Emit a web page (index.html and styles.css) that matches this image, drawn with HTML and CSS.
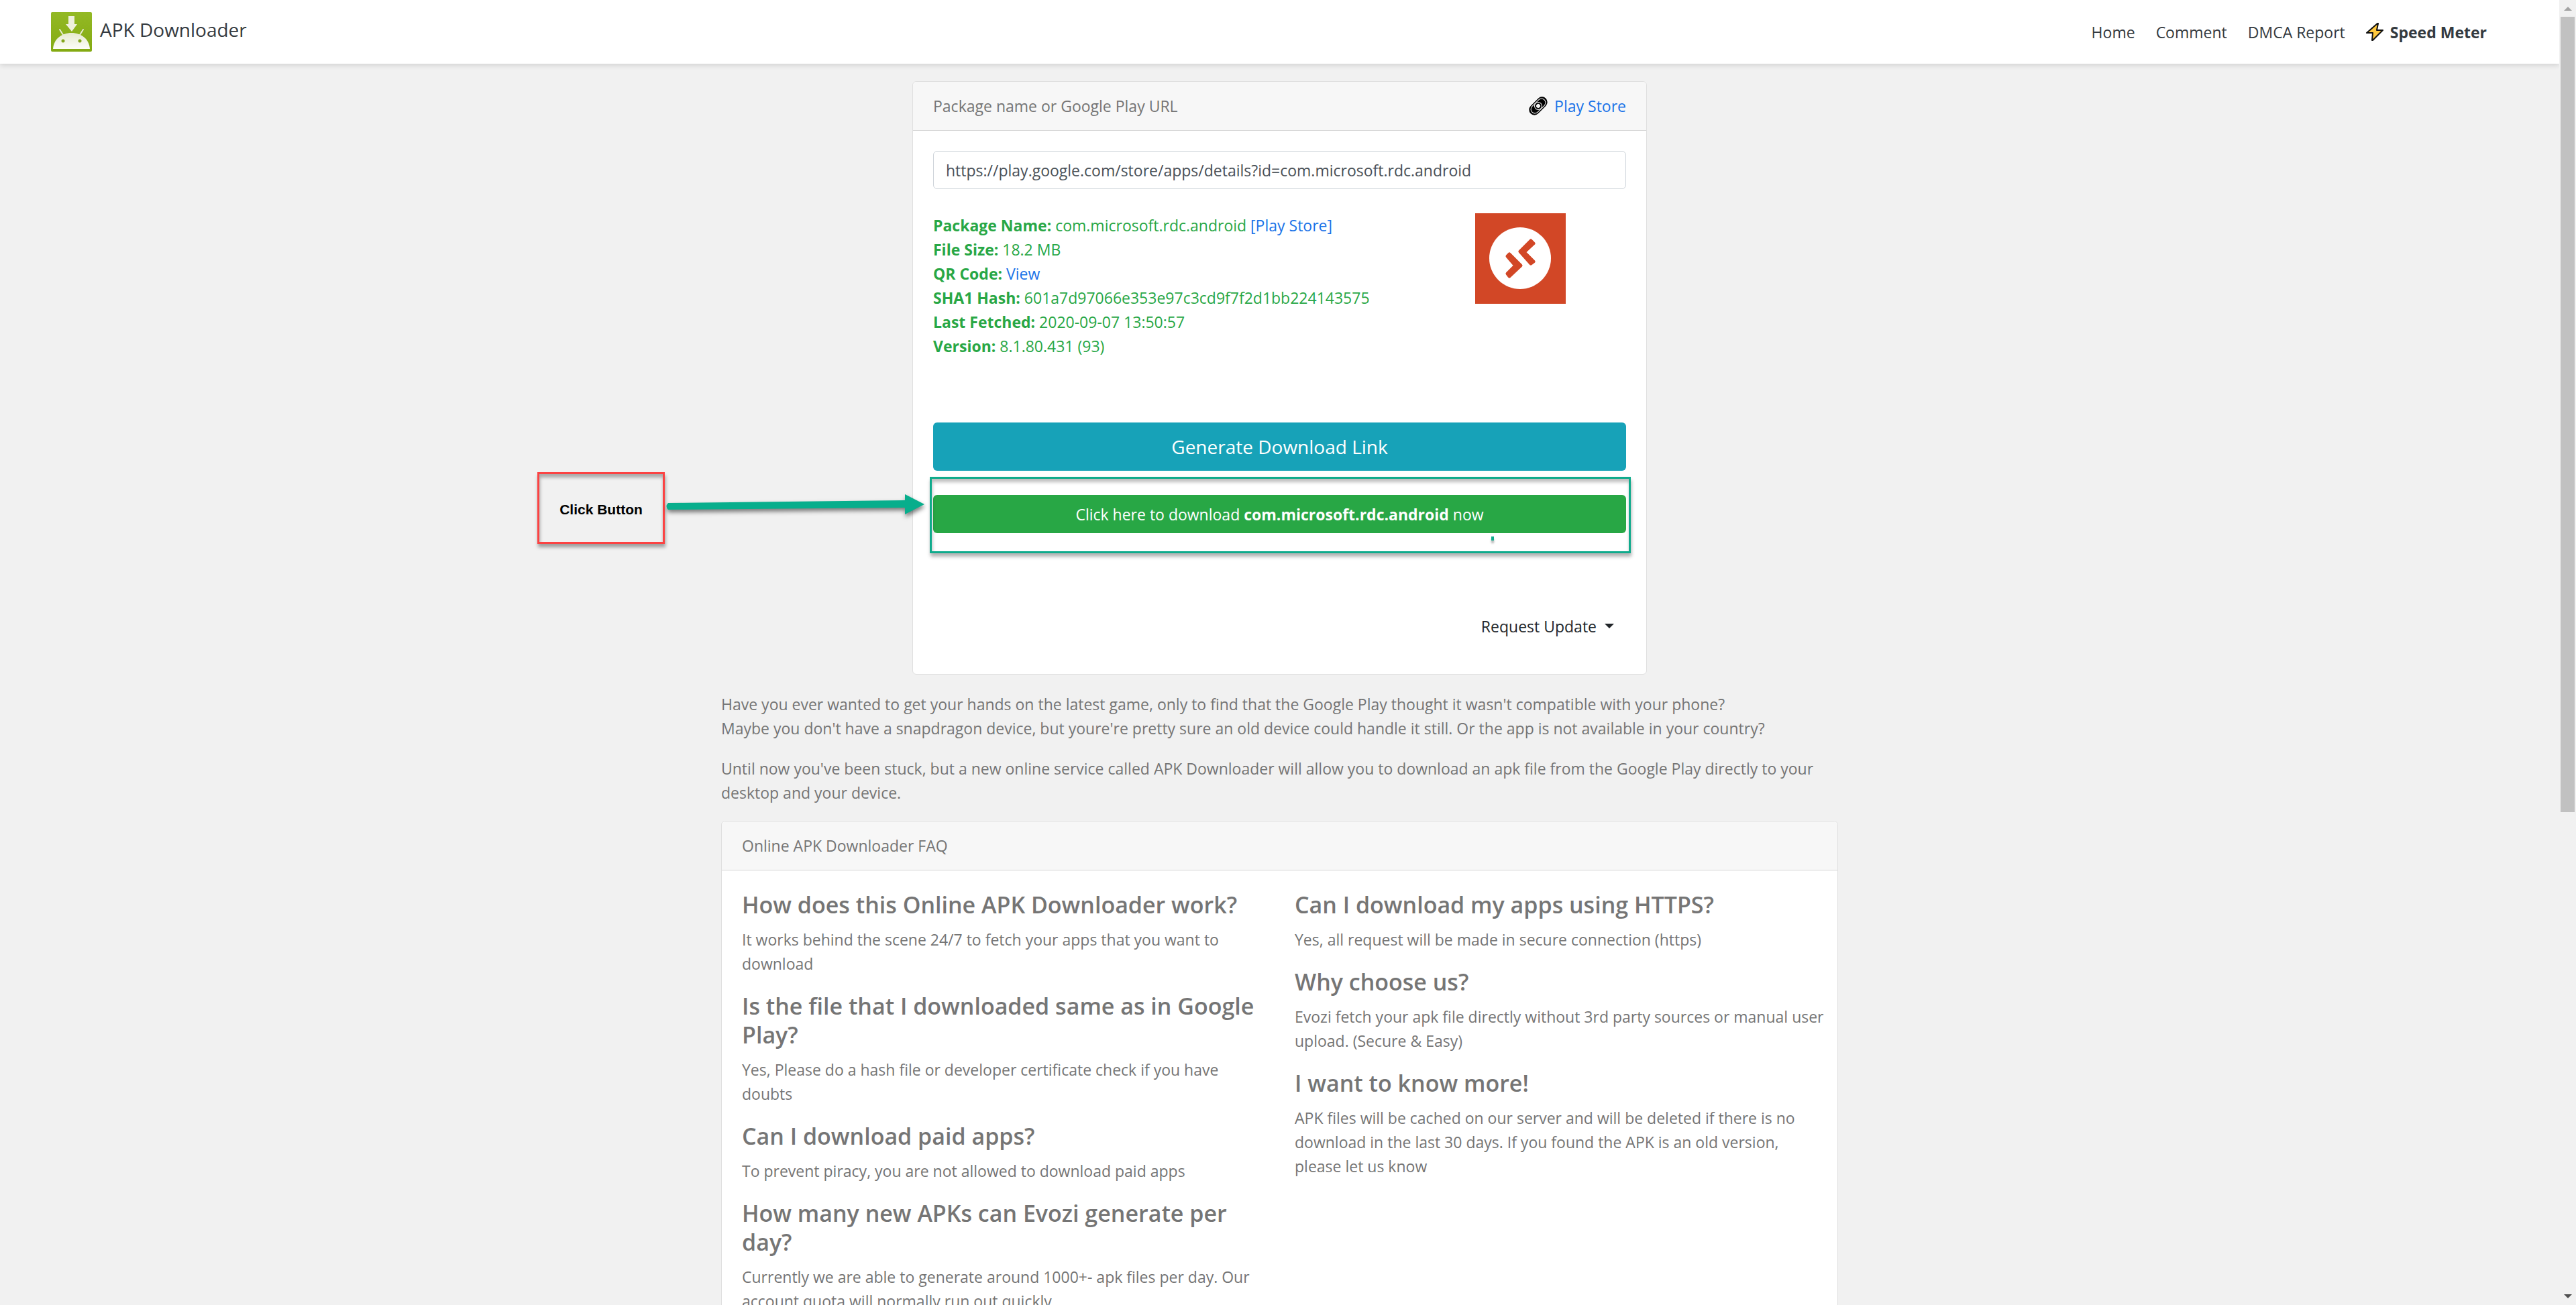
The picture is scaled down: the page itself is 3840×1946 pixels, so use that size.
FILE: index.html
```
<!DOCTYPE html>
<html lang="en">
<head>
<meta charset="utf-8">
<title>APK Downloader</title>
<link rel="stylesheet" href="styles.css">
</head>
<body>
<div class="viewport">
  <div class="page">
    <header class="navbar">
      <a class="brand" href="#">
        <svg class="brand-logo" viewBox="0 0 61 60" aria-hidden="true">
          <defs>
            <linearGradient id="logo-green" x1="0" y1="0" x2="0" y2="1"><stop offset="0" stop-color="#93b924"/><stop offset="1" stop-color="#84aa12"/></linearGradient>
            <linearGradient id="logo-cream" x1="0" y1="0" x2="0" y2="1"><stop offset="0" stop-color="#e6ead0"/><stop offset="1" stop-color="#fdfdf8"/></linearGradient>
          </defs>
          <rect width="61" height="59" rx="2" fill="url(#logo-green)"/>
          <path d="M26 6h9v12h4l-8 11-9-11h4z" fill="#eef0dc"/>
          <path d="M13 26l5 8M48 26l-5 8" stroke="#e6ead0" stroke-width="2" stroke-linecap="round"/>
          <path d="M3 55C4 40 16 31 30.500 31S57 40 58 55z" fill="url(#logo-cream)"/>
          <circle cx="18" cy="43" r="2.500" fill="#84a51d"/><circle cx="43" cy="43" r="2.500" fill="#84a51d"/>
        </svg>
        APK Downloader
      </a>
      <nav class="nav">
        <a href="#">Home</a>
        <a href="#">Comment</a>
        <a href="#">DMCA Report</a>
        <a class="nav-strong" href="#">
          <svg class="bolt" viewBox="0 0 26 27" aria-hidden="true"><path d="M17 1L1 15h9L9 26h1L25 11h-9l2-10z" fill="#ffc83d" stroke="#111" stroke-width="2" stroke-linejoin="round"/></svg>
          Speed Meter
        </a>
      </nav>
    </header>

    <main class="content">
      <section class="card tool">
        <div class="card-header">
          <label for="package">Package name or Google Play URL</label>
          <span class="store">
            <svg class="link-icon" viewBox="0 0 28 28" aria-hidden="true">
              <g transform="rotate(-45 14 14)">
                <rect x="-2" y="6" width="32" height="16" rx="8"/>
                <rect x="1" y="8" width="26" height="12" rx="6" fill="none" stroke="#f7f7f7" stroke-width="1"/>
                <circle cx="14" cy="14" r="6" fill="#f7f7f7"/>
                <circle cx="14" cy="14" r="4" fill="#f7f7f7" stroke="#000" stroke-width="2"/>
              </g>
            </svg>
            <a href="#">Play Store</a>
          </span>
        </div>
        <div class="card-body">
          <input class="field" id="package" type="text" value="https://play.google.com/store/apps/details?id=com.microsoft.rdc.android">
          <div class="result">
            <div class="details">
              <div><b>Package Name:</b> com.microsoft.rdc.android <a href="#">[Play Store]</a></div>
              <div><b>File Size:</b> 18.2 MB</div>
              <div><b>QR Code:</b> <a href="#">View</a></div>
              <div><b>SHA1 Hash:</b> 601a7d97066e353e97c3cd9f7f2d1bb224143575</div>
              <div><b>Last Fetched:</b> 2020-09-07 13:50:57</div>
              <div><b>Version:</b> 8.1.80.431 (93)</div>
            </div>
            <svg class="app-icon" viewBox="0 0 135 135" role="img" aria-label="Remote Desktop">
              <rect width="135" height="135" fill="#d24726"/>
              <circle cx="67" cy="67" r="46" fill="#fff"/>
              <g fill="#d24726" stroke="#d24726" stroke-width="5" stroke-linejoin="round">
                <path d="M83 41l4 4-14 13 14 14-4 3-16-18z"/>
                <path d="M51 61l-3 3 12 14-12 12 3 4 17-16z"/>
              </g>
            </svg>
          </div>
          <button class="btn btn-generate" type="button">Generate Download Link</button>
          <div class="download">
            <button class="btn btn-download" type="button">Click here to download <b>com.microsoft.rdc.android</b> now</button>
            <div class="highlight"></div>
            <div class="tick"></div>
            <div class="callout">Click Button</div>
            <svg class="arrow" viewBox="0 0 390 40" aria-hidden="true"><path d="M5 14L358 10V1l29 15-29 15V21L5 24q-5-5 0-10z" fill="#07ae8c"/></svg>
          </div>
          <div class="update"><button class="btn-update" type="button">Request Update<span class="caret"></span></button></div>
        </div>
      </section>

      <p>Have you ever wanted to get your hands on the latest game, only to find that the Google Play thought it wasn't compatible with your phone?<br>Maybe you don't have a snapdragon device, but youre're pretty sure an old device could handle it still. Or the app is not available in your country?</p>
      <p>Until now you've been stuck, but a new online service called APK Downloader will allow you to download an apk file from the Google Play directly to your desktop and your device.</p>

      <section class="card">
        <div class="card-header">Online APK Downloader FAQ</div>
        <div class="card-body faq">
          <div>
            <h4>How does this Online APK Downloader work?</h4>
            <p>It works behind the scene 24/7 to fetch your apps that you want to download</p>
            <h4>Is the file that I downloaded same as in Google Play?</h4>
            <p>Yes, Please do a hash file or developer certificate check if you have doubts</p>
            <h4>Can I download paid apps?</h4>
            <p>To prevent piracy, you are not allowed to download paid apps</p>
            <h4>How many new APKs can Evozi generate per day?</h4>
            <p>Currently we are able to generate around 1000+- apk files per day. Our account quota will normally run out quickly.</p>
          </div>
          <div>
            <h4>Can I download my apps using HTTPS?</h4>
            <p>Yes, all request will be made in secure connection (https)</p>
            <h4>Why choose us?</h4>
            <p>Evozi fetch your apk file directly without 3rd party sources or manual user upload. (Secure &amp; Easy)</p>
            <h4>I want to know more!</h4>
            <p>APK files will be cached on our server and will be deleted if there is no download in the last 30 days. If you found the APK is an old version,<br>please let us know</p>
          </div>
        </div>
      </section>
    </main>
  </div>
  <div class="scrollbar" aria-hidden="true">
    <span class="scroll-up"></span>
    <span class="scroll-thumb"></span>
    <span class="scroll-down"></span>
  </div>
</div>
</body>
</html>
```
FILE: styles.css
```
* { box-sizing: border-box; }

body {
  margin: 0;
  background: #f1f1f1;
  color: #757575;
  font: 23px/36px "Open Sans", "Noto Sans", sans-serif;
}

a { color: #1a73e8; text-decoration: none; }
button, input { font: inherit; }

.viewport { display: flex; height: 100vh; overflow: hidden; }
.page { flex: 1; min-width: 0; }

/* Top bar */
.navbar {
  display: flex;
  justify-content: space-between;
  align-items: center;
  height: 95px;
  padding: 0 108px 0 76px;
  background: #fff;
  box-shadow: 0 2px 8px rgba(0, 0, 0, 0.15);
}
.brand { display: flex; align-items: flex-start; gap: 12px; color: #343a40; font-size: 28px; line-height: 52px; }
.brand-logo { width: 61px; height: 60px; }
.nav { display: flex; gap: 31px; }
.nav a { color: #343a40; }
.nav-strong { display: flex; align-items: center; gap: 10px; font-weight: 700; }
.bolt { width: 26px; height: 27px; }

/* Page body */
.content { max-width: 1665px; margin: 0 auto; padding-top: 26px; }
p { margin: 0 0 24px; }

.card {
  background: #fff;
  border: 1px solid #dfdfdf;
  border-radius: 6px;
}
.card-header {
  display: flex;
  justify-content: space-between;
  padding: 18px 30px;
  background: #f7f7f7;
  border-bottom: 1px solid #d5d5d5;
  border-radius: 6px 6px 0 0;
}
.card-body { padding: 30px; }

.tool { max-width: 1095px; margin: 0 auto 26px; }
.store { display: flex; align-items: center; gap: 10px; }
.link-icon { width: 28px; height: 28px; overflow: visible; }

.field {
  display: block;
  width: 100%;
  height: 57px;
  padding: 0 18px;
  border: 1px solid #ced4da;
  border-radius: 6px;
  color: #495057;
  background: #fff;
}

.result { display: flex; justify-content: space-between; padding: 36px 90px 96px 0; }
.details { color: #28a745; }
.app-icon { width: 135px; height: 135px; }

.btn {
  display: block;
  width: 100%;
  border: 0;
  border-radius: 6px;
  color: #fff;
}
.btn-generate { height: 72px; background: #17a2b8; font-size: 28px; }
.btn-download { height: 57px; background: #28a745; }

/* Download button with the marks drawn over it */
.download { position: relative; margin-top: 36px; }
.highlight {
  position: absolute;
  inset: -27px -7px -30px -5px;
  border: 3px solid #0fab8c;
  box-shadow: 1px 5px 5px rgba(0, 0, 0, 0.3), inset 1px 5px 5px rgba(0, 0, 0, 0.25);
  pointer-events: none;
}
.tick {
  position: absolute;
  left: 832px;
  top: 62px;
  width: 4px;
  height: 6px;
  background: #0fab8c;
  box-shadow: 0 4px 3px rgba(0, 0, 0, 0.3);
}
.callout {
  position: absolute;
  left: -590px;
  top: -34px;
  width: 190px;
  height: 107px;
  border: 3px solid #fb4343;
  box-shadow: 1px 5px 5px rgba(0, 0, 0, 0.35), inset 1px 5px 5px rgba(0, 0, 0, 0.3);
  color: #000;
  font: bold 21px/106px "Liberation Sans", Arial, sans-serif;
  text-align: center;
}
.arrow {
  position: absolute;
  left: -400px;
  top: -2px;
  width: 390px;
  height: 40px;
  filter: drop-shadow(1px 4px 3px rgba(0, 0, 0, 0.5));
}

.update { display: flex; justify-content: flex-end; padding: 110px 0 13px; }
.btn-update {
  display: flex;
  align-items: center;
  gap: 12px;
  height: 57px;
  padding: 0 18px;
  border: 0;
  background: none;
  color: #212529;
}
.caret { border: 7px solid transparent; border-top-color: #212529; border-bottom: 0; }

/* FAQ */
.faq { display: grid; grid-template-columns: 779fr 799fr; gap: 45px; padding-right: 10px; }
h4 { margin: 0 0 12px; font-size: 34px; line-height: 43px; font-weight: 600; }

/* Window scrollbar */
.scrollbar {
  display: flex;
  flex-direction: column;
  align-items: center;
  width: 25px;
  padding: 10px 0;
  background: #f1f1f1;
}
.scroll-up { border: 6px solid transparent; border-bottom-color: #a3a3a3; border-top: 0; }
.scroll-thumb { width: 21px; height: 1186px; margin-top: 9px; background: #c1c1c1; }
.scroll-down { margin-top: auto; border: 6px solid transparent; border-top-color: #505050; border-bottom: 0; }
```
